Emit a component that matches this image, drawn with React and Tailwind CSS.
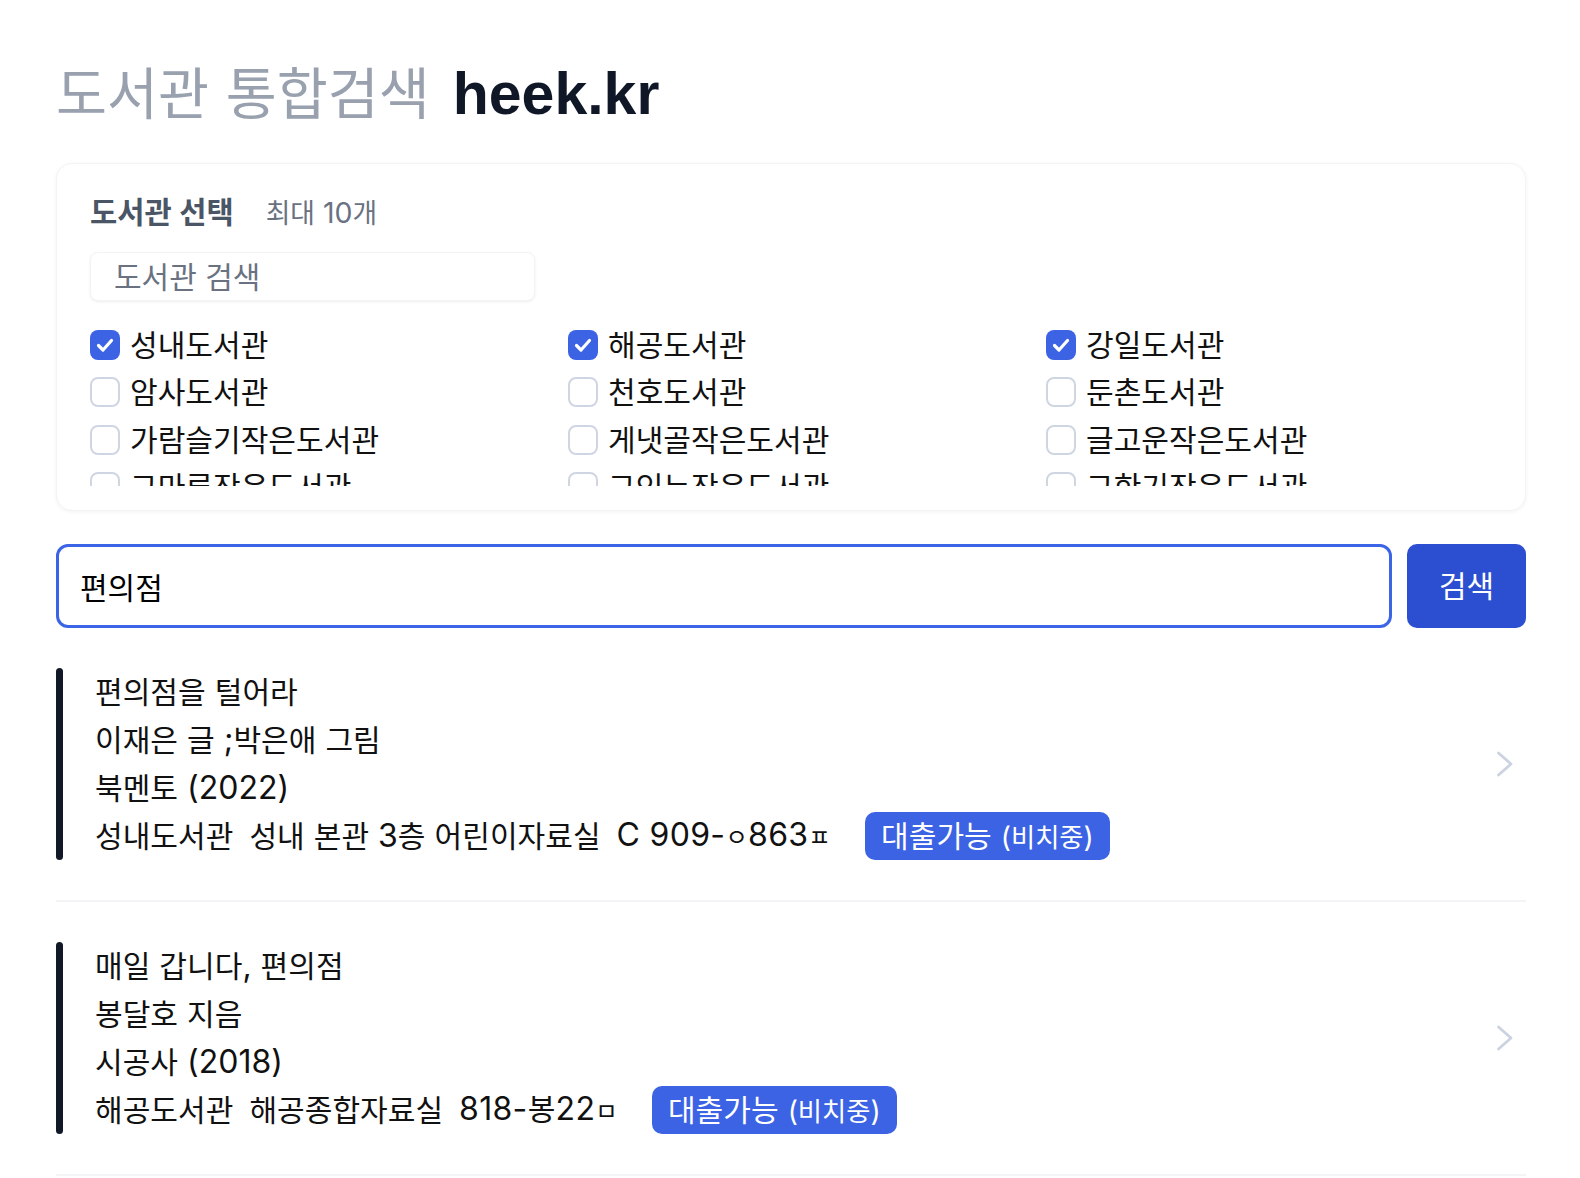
import React from "react";

const SPLIT = /([\uAC00-\uD7AF]+|[\u3131-\u318E]+)/;

function T({ children }) {
  const parts = String(children).split(SPLIT);
  return parts.map((p, i) => {
    if (!p) return null;
    if (/^[\uAC00-\uD7AF]+$/.test(p)) {
      return (
        <span key={i} className="text-[0.94em]">
          {p}
        </span>
      );
    }
    if (/^[\u3131-\u318E]+$/.test(p)) {
      return (
        <span key={i} className="text-[0.76em]">
          {p}
        </span>
      );
    }
    return <React.Fragment key={i}>{p}</React.Fragment>;
  });
}

const libraries = [
  ["성내도서관", true],
  ["해공도서관", true],
  ["강일도서관", true],
  ["암사도서관", false],
  ["천호도서관", false],
  ["둔촌도서관", false],
  ["가람슬기작은도서관", false],
  ["게냇골작은도서관", false],
  ["글고운작은도서관", false],
  ["그마루작은도서관", false],
  ["그인누작은도서관", false],
  ["그한기작은도서관", false],
  ["길동작은도서관", false],
  ["명일작은도서관", false],
  ["상일작은도서관", false],
];

const results = [
  {
    title: "편의점을 털어라",
    author: "이재은 글 ;박은애 그림",
    pub: "북멘토 (2022)",
    lib: "성내도서관",
    loc: "성내 본관 3층 어린이자료실",
    call: "C 909-ㅇ863ㅍ",
  },
  {
    title: "매일 갑니다, 편의점",
    author: "봉달호 지음",
    pub: "시공사 (2018)",
    lib: "해공도서관",
    loc: "해공종합자료실",
    call: "818-봉22ㅁ",
  },
];

function Check({ checked }) {
  if (checked) {
    return (
      <span className="flex h-[30px] w-[30px] shrink-0 items-center justify-center rounded-[8px] bg-[#3b63e3]">
        <svg width="30" height="30" viewBox="0 0 30 30" fill="none">
          <polyline
            points="8.5,15.5 13,20 21.5,10.5"
            stroke="white"
            strokeWidth="3.2"
            strokeLinecap="round"
            strokeLinejoin="round"
          />
        </svg>
      </span>
    );
  }
  return (
    <span className="h-[30px] w-[30px] shrink-0 rounded-[8px] border-2 border-[#cfd6e2] bg-white" />
  );
}

function Chevron() {
  return (
    <svg width="18" height="26" viewBox="0 0 18 26" fill="none">
      <polyline
        points="2.5,2 15,13 2.5,24"
        stroke="#cbd3e0"
        strokeWidth="2.8"
        strokeLinecap="round"
        strokeLinejoin="round"
      />
    </svg>
  );
}

export default function App() {
  return (
    <div className="min-h-screen bg-white pl-14 pr-[54px] font-['Inter','Noto_Sans_CJK_KR',sans-serif] text-[#111111]">
      <div className="mt-[53px] flex h-[80px] items-baseline leading-[80px]">
        <span className="text-[59px] text-gray-400">
          <T>도서관 통합검색</T>
        </span>
        <span className="ml-[23px] font-['Liberation_Sans','Arial',sans-serif] text-[59px] font-bold text-gray-900">
          heek.kr
        </span>
      </div>

      <div className="mt-[30px] rounded-2xl border border-gray-100 bg-white pl-[33px] pr-[33px] pt-[28px] pb-[24px] shadow-[0_1px_4px_rgba(0,0,0,0.05)]">
        <div className="flex items-baseline leading-[40px]">
          <span className="text-[31.5px] font-bold text-gray-600">
            <T>도서관 선택</T>
          </span>
          <span className="ml-[32px] text-[28.5px] text-gray-500">
            <T>최대 10개</T>
          </span>
        </div>
        <input
          className="mt-[19px] block h-[49px] w-[445px] rounded-lg border border-gray-100 bg-white pl-[23px] text-[30px] shadow-[0_1px_3px_rgba(0,0,0,0.07)] outline-none placeholder:text-gray-500"
          placeholder="도서관 검색"
        />
        <div className="mt-[20px] h-[165px] overflow-hidden">
          <div className="grid grid-cols-[478px_478px_1fr]">
            {libraries.map(([name, checked]) => (
              <label
                key={name}
                className="flex h-[47.5px] items-center gap-[10px] text-[32px] leading-[47px]"
              >
                <Check checked={checked} />
                <span>
                  <T>{name}</T>
                </span>
              </label>
            ))}
          </div>
        </div>
      </div>

      <div className="mt-[33px] flex gap-[15px]">
        <input
          className="block h-[84px] flex-1 rounded-xl border-[3px] border-[#3b65e6] bg-white pl-[21px] text-[30px] text-black outline-none"
          defaultValue="편의점"
        />
        <button className="h-[84px] w-[119px] rounded-[10px] bg-[#2b4fd0] text-[30px] text-white">
          검색
        </button>
      </div>

      <div>
        {results.map((r) => (
          <div
            key={r.title}
            className="flex items-center justify-between border-b-2 border-gray-100 py-10"
          >
            <div className="flex">
              <div className="w-[7px] rounded-full bg-[#111827]" />
              <div className="pl-[32px] text-[32px] leading-[48px]">
                <div className="h-[48px]">
                  <T>{r.title}</T>
                </div>
                <div className="h-[48px]">
                  <T>{r.author}</T>
                </div>
                <div className="h-[48px]">
                  <T>{r.pub}</T>
                </div>
                <div className="flex h-[48px] items-center">
                  <span className="mr-4">
                    <T>{r.lib}</T>
                  </span>
                  <span className="mr-4">
                    <T>{r.loc}</T>
                  </span>
                  <span className="tracking-[0.3px]">
                    <T>{r.call}</T>
                  </span>
                  <span className="ml-[34px] inline-block h-[48px] rounded-[10px] bg-[#3b63e3] px-4 leading-[48px] text-white">
                    <T>대출가능 </T>
                    <span className="text-[28px]">
                      <T>(비치중)</T>
                    </span>
                  </span>
                </div>
              </div>
            </div>
            <div className="pr-3">
              <Chevron />
            </div>
          </div>
        ))}
      </div>
    </div>
  );
}
